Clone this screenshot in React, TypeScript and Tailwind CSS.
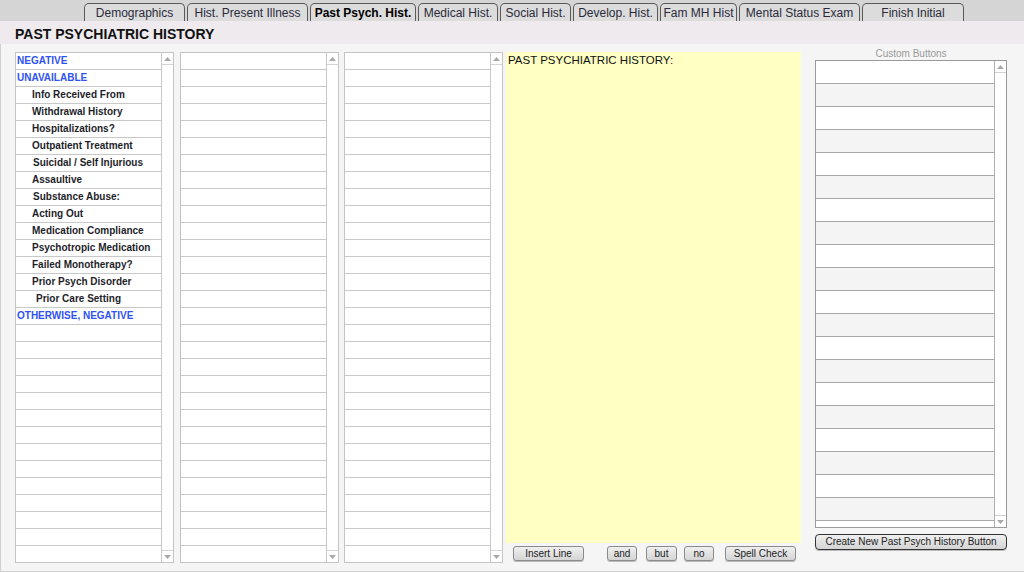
import React from 'react';

const tabs = [
  { label: 'Demographics', w: 'w-[101px]' },
  { label: 'Hist. Present Illness', w: 'w-[121px]' },
  { label: 'Past Psych. Hist.', w: 'w-[106px]', active: true },
  { label: 'Medical Hist.', w: 'w-[80px]' },
  { label: 'Social Hist.', w: 'w-[71px]' },
  { label: 'Develop. Hist.', w: 'w-[85px]' },
  { label: 'Fam MH Hist', w: 'w-[77px]' },
  { label: 'Mental Status Exam', w: 'w-[121px]' },
  { label: 'Finish Initial', w: 'w-[102px]' },
];

type Item = { text: string; blue?: boolean; indent?: string };

const firstList: Item[] = [
  { text: 'NEGATIVE', blue: true },
  { text: 'UNAVAILABLE', blue: true },
  { text: 'Info Received From' },
  { text: 'Withdrawal History' },
  { text: 'Hospitalizations?' },
  { text: 'Outpatient Treatment' },
  { text: 'Suicidal / Self Injurious', indent: 'pl-[17px]' },
  { text: 'Assaultive' },
  { text: 'Substance Abuse:', indent: 'pl-[17px]' },
  { text: 'Acting Out' },
  { text: 'Medication Compliance' },
  { text: 'Psychotropic Medication' },
  { text: 'Failed Monotherapy?' },
  { text: 'Prior Psych Disorder' },
  { text: 'Prior Care Setting', indent: 'pl-[20px]' },
  { text: 'OTHERWISE, NEGATIVE', blue: true },
];

function Arrow({ up }: { up?: boolean }) {
  return (
    <svg width="7" height="4" viewBox="0 0 7 4">
      <path d={up ? 'M0 4 L3.5 0 L7 4 Z' : 'M0 0 L3.5 4 L7 0 Z'} fill="#a8a8a8" />
    </svg>
  );
}

function PickList({ items = [] }: { items?: Item[] }) {
  const rows = Array.from({ length: 30 }, (_, i) => items[i]);
  return (
    <div className="flex w-[159px] h-[511px] border border-[#c4c4c4] bg-white">
      <div className="flex-1 flex flex-col overflow-hidden">
        {rows.map((it, i) => (
          <div
            key={i}
            className={`h-[17px] shrink-0 border-b border-[#c8c8c8] flex items-center text-[10px] font-bold leading-none whitespace-nowrap ${
              it?.blue ? 'pl-[1px] text-[#2f52f2]' : `${it?.indent ?? 'pl-[16px]'} text-[#1e1e2a]`
            }`}
          >
            {it?.text}
          </div>
        ))}
      </div>
      <div className="w-[12px] border-l border-[#c8c8c8] flex flex-col justify-between bg-white">
        <div className="h-[12px] border-b border-[#d4d4d4] flex items-center justify-center">
          <Arrow up />
        </div>
        <div className="h-[12px] border-t border-[#d4d4d4] flex items-center justify-center">
          <Arrow />
        </div>
      </div>
    </div>
  );
}

function Btn({ children, className = '' }: { children: React.ReactNode; className?: string }) {
  return (
    <button
      className={`h-[15px] rounded-[3px] border border-[#8a8a8a] bg-gradient-to-b from-[#f0f0f0] to-[#d4d4d4] text-[10px] leading-none text-[#222] shadow-[0_1px_0_#bbb] ${className}`}
    >
      {children}
    </button>
  );
}

export default function App() {
  return (
    <div className="w-[1024px] h-[572px] flex flex-col bg-[#f5f5f5] font-['Liberation_Sans',Arial,sans-serif] overflow-hidden">
      {/* Tabs */}
      <div className="h-[21px] bg-[#d5d5d5] flex items-end pl-[84px] gap-[2px]">
        {tabs.map((t) => (
          <div
            key={t.label}
            className={`${t.w} h-[18px] rounded-t-[5px] border border-b-0 border-[#5a5a5a] bg-[#dcdcdc] flex items-center justify-center text-[12px] leading-none ${
              t.active ? 'font-bold text-black' : 'text-[#2a2a3a]'
            }`}
          >
            {t.label}
          </div>
        ))}
      </div>

      {/* Title */}
      <div className="h-[23px] bg-[#eeeaee] flex items-center pl-[15px] pt-[3px]">
        <h1 className="text-[14px] font-bold text-[#111] leading-none">PAST PSYCHIATRIC HISTORY</h1>
      </div>

      {/* Body */}
      <div className="flex-1 flex pl-[14px] pt-[8px] border-l border-b border-[#d0d0d0]">
        <PickList items={firstList} />
        <div className="w-[6px]" />
        <PickList />
        <div className="w-[5px]" />
        <PickList />

        <div className="ml-[3px] w-[295px] flex flex-col">
          <div className="h-[491px] bg-[#ffffc4] pl-[2px] pt-[3px] text-[11.5px] text-[#111] leading-none">
            PAST PSYCHIATRIC HISTORY:
          </div>
          <div className="flex items-center mt-[3px]">
            <Btn className="ml-[7px] w-[71px]">Insert Line</Btn>
            <Btn className="ml-[23px] w-[30px]">and</Btn>
            <Btn className="ml-[9px] w-[31px]">but</Btn>
            <Btn className="ml-[7px] w-[30px]">no</Btn>
            <Btn className="ml-[11px] w-[71px]">Spell Check</Btn>
          </div>
        </div>

        <div className="ml-[14px] w-[192px] flex flex-col">
          <div className="h-[7px] -mt-[3px] mb-[3px] text-center text-[10px] leading-none text-[#9a9a9a]">Custom Buttons</div>
          <div className="flex h-[468px] border border-[#9a9a9a] bg-white mt-[1px]">
            <div className="flex-1 flex flex-col overflow-hidden">
              {Array.from({ length: 21 }, (_, i) => (
                <div
                  key={i}
                  className={`h-[23px] shrink-0 border-b border-[#a8a8a8] ${i % 2 === 0 ? 'bg-white' : 'bg-[#f4f4f4]'}`}
                />
              ))}
            </div>
            <div className="w-[12px] border-l border-[#b0b0b0] flex flex-col justify-between">
              <div className="h-[12px] border-b border-[#d0d0d0] flex items-center justify-center">
                <Arrow up />
              </div>
              <div className="h-[12px] border-t border-[#d0d0d0] flex items-center justify-center">
                <Arrow />
              </div>
            </div>
          </div>
          <Btn className="mt-[6px] h-[16px] w-full border-[#333] rounded-[4px]">Create New Past Psych History Button</Btn>
        </div>
      </div>
    </div>
  );
}
